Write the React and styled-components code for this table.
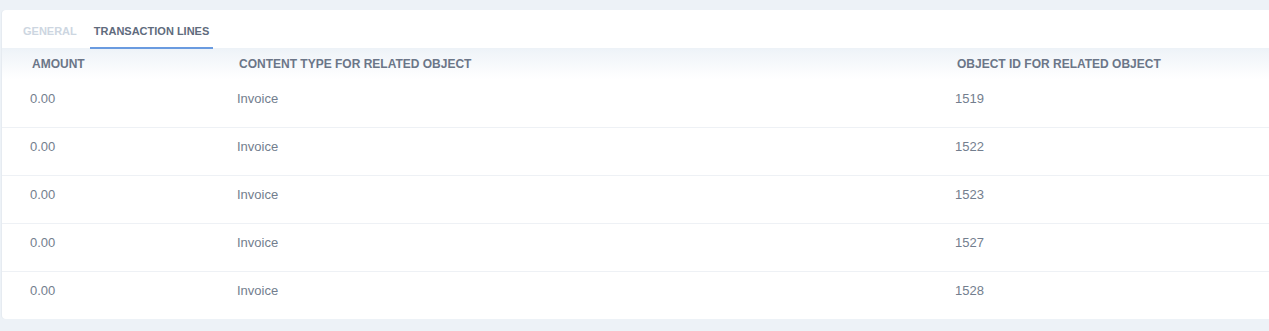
import styled, { createGlobalStyle } from 'styled-components';

// Styles globaux de la page
const GlobalStyle = createGlobalStyle`
  html, body {
    margin: 0;
    padding: 0;
    background: #edf2f7;
    overflow: hidden;
    font-family: 'Liberation Sans', Arial, sans-serif;
  }
`;

const Page = styled.div`
  padding: 10px 0 12px 2px;
`;

// Carte blanche qui dépasse un peu à droite
const Card = styled.div`
  background: #fff;
  border-radius: 4px;
  margin-right: -8px;
  box-shadow: -1px 0 0 #e6ebf1;
  overflow: hidden;
`;

const TabBar = styled.div`
  display: flex;
  gap: 9px;
  height: 39px;
  padding-left: 17px;
  border-bottom: 1px solid #edf2f7;
  box-sizing: border-box;
`;

const Tab = styled.div`
  padding: 15px 4px 0;
  font-size: 11px;
  font-weight: bold;
  line-height: 13px;
  text-transform: uppercase;
  color: ${(p) => (p.active ? '#5f6b7d' : '#cdd6e1')};
  border-bottom: 2px solid ${(p) => (p.active ? '#6a9be0' : 'transparent')};
  margin-bottom: -1px;
`;

const Grid = styled.div`
  display: grid;
  grid-template-columns: 207px 718px 1fr;
`;

const HeaderRow = styled(Grid)`
  height: 30px;
  align-items: center;
  background: linear-gradient(#eef3f8, #ffffff);
`;

const HeaderCell = styled.div`
  padding-left: 30px;
  font-size: 12px;
  font-weight: bold;
  color: #6b7688;
`;

const Row = styled(Grid)`
  height: 48px;
  box-sizing: border-box;
  border-top: ${(p) => (p.first ? 'none' : '1px solid #eef1f5')};
`;

const Cell = styled.div`
  padding: ${(p) => (p.first ? '12px' : '11px')} 0 0 28px;
  font-size: 13px;
  line-height: 16px;
  color: #737e8e;
`;

const lines = [
  { amount: '0.00', type: 'Invoice', id: '1519' },
  { amount: '0.00', type: 'Invoice', id: '1522' },
  { amount: '0.00', type: 'Invoice', id: '1523' },
  { amount: '0.00', type: 'Invoice', id: '1527' },
  { amount: '0.00', type: 'Invoice', id: '1528' },
];

const App = () => (
  <Page>
    <GlobalStyle />
    <Card>
      <TabBar>
        <Tab>General</Tab>
        <Tab active>Transaction lines</Tab>
      </TabBar>
      <HeaderRow>
        <HeaderCell>AMOUNT</HeaderCell>
        <HeaderCell>CONTENT TYPE FOR RELATED OBJECT</HeaderCell>
        <HeaderCell>OBJECT ID FOR RELATED OBJECT</HeaderCell>
      </HeaderRow>
      {lines.map((line, i) => (
        <Row key={line.id} first={i === 0}>
          <Cell first={i === 0}>{line.amount}</Cell>
          <Cell first={i === 0}>{line.type}</Cell>
          <Cell first={i === 0}>{line.id}</Cell>
        </Row>
      ))}
    </Card>
  </Page>
);

export default App;
